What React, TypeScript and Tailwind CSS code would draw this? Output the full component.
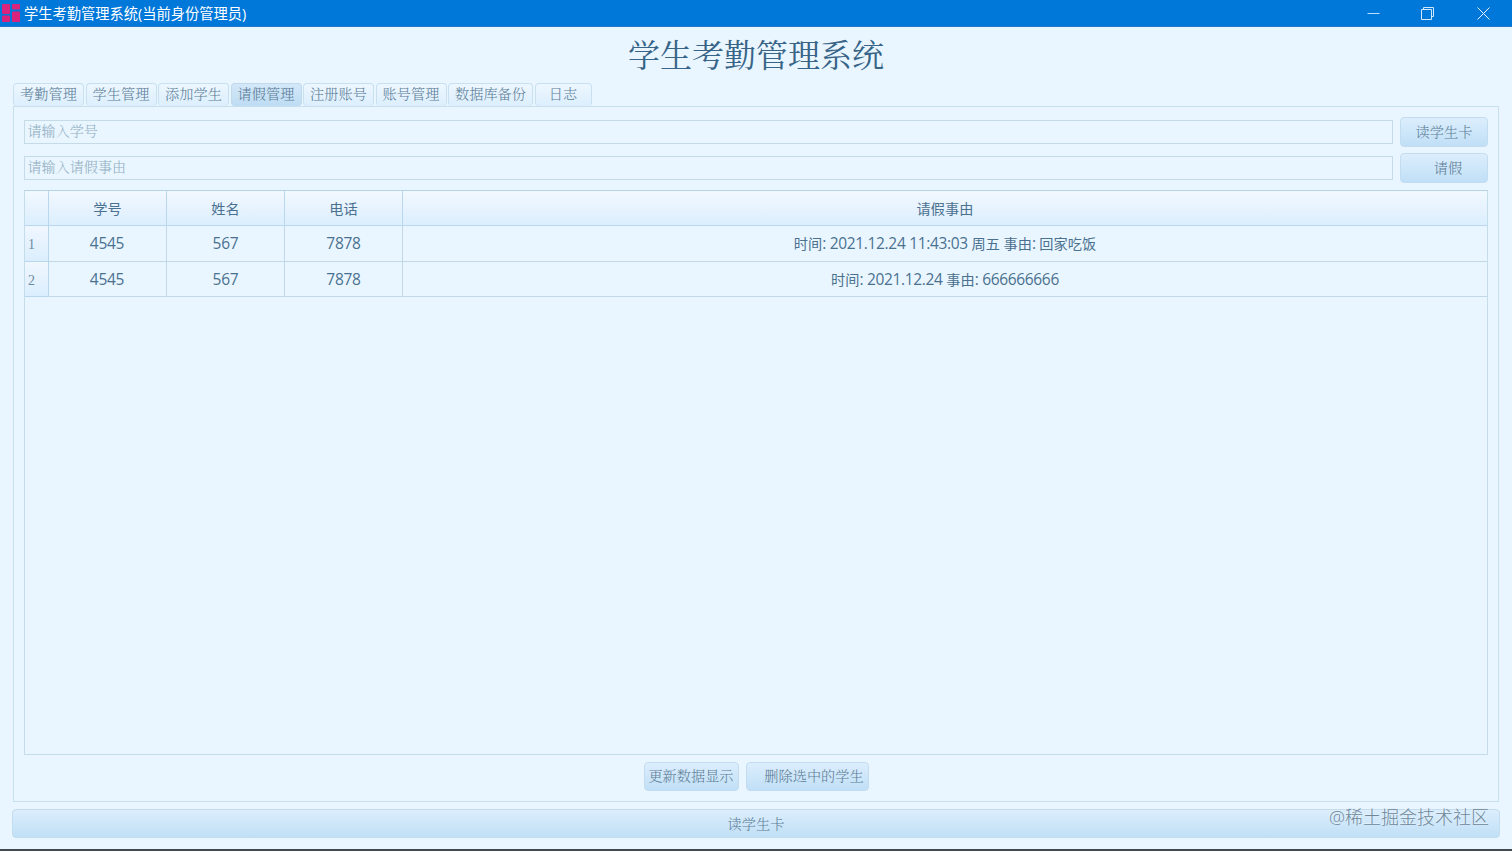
import React from 'react';
import clsx from 'clsx';

interface Tab {
  label: string;
  width: string;
}

interface LeaveRecord {
  id: string;
  name: string;
  phone: string;
  reason: string;
}

const TABS: Tab[] = [
  { label: '考勤管理', width: 'w-[71px]' },
  { label: '学生管理', width: 'w-[71px]' },
  { label: '添加学生', width: 'w-[71px]' },
  { label: '请假管理', width: 'w-[71px]' },
  { label: '注册账号', width: 'w-[71px]' },
  { label: '账号管理', width: 'w-[71px]' },
  { label: '数据库备份', width: 'w-[85px]' },
  { label: '日志', width: 'w-[57px]' },
];

const RECORDS: LeaveRecord[] = [
  { id: '4545', name: '567', phone: '7878', reason: '时间: 2021.12.24 11:43:03 周五 事由: 回家吃饭' },
  { id: '4545', name: '567', phone: '7878', reason: '时间: 2021.12.24 事由: 666666666' },
];

const COLUMNS = 'grid grid-cols-[24px_118px_118px_118px_1fr]';

function TitleBar() {
  return (
    <header className="flex h-[27px] shrink-0 items-center border-b border-[#2478c6] bg-[#0078d9] text-white">
      <svg className="ml-0.5 h-[18px] w-[18px] shrink-0" viewBox="0 0 18 18" fill="#d9237d">
        <rect x="0" y="0" width="8" height="10" rx="1" />
        <rect x="0" y="11.5" width="8" height="6.5" rx="1" />
        <rect x="10" y="0" width="8" height="5.5" rx="1" />
        <rect x="10" y="7.5" width="8" height="10.5" rx="1" />
      </svg>
      <span className="ml-1 pt-[3px] font-['Open_Sans','Noto_Sans_CJK_SC',sans-serif] text-[14.25px] leading-none font-normal">
        学生考勤管理系统(当前身份管理员)
      </span>
      <div className="ml-auto flex items-center">
        <button aria-label="最小化" className="flex w-[54px] justify-center">
          <svg width="13" height="13" viewBox="0 0 13 13" stroke="#b9dcf8" fill="none">
            <path d="M0.5 6.5h12" />
          </svg>
        </button>
        <button aria-label="还原" className="flex w-[55px] justify-center">
          <svg width="13" height="13" viewBox="0 0 13 13" stroke="#d3e9fb" fill="none">
            <path d="M0.5 2.5h10v10h-10zM2.5 2.5v-2h10v9h-2" />
          </svg>
        </button>
        <button aria-label="关闭" className="flex w-[57px] justify-center">
          <svg width="13" height="13" viewBox="0 0 13 13" stroke="#e4f2fd" fill="none">
            <path d="M0.5 0.5l12 12M12.5 0.5l-12 12" />
          </svg>
        </button>
      </div>
    </header>
  );
}

function PushButton({ className, children }: { className?: string; children: React.ReactNode }) {
  return (
    <button
      className={clsx(
        'flex items-center justify-center rounded border border-[#c3dcef] bg-linear-to-b from-[#dceefd] to-[#c0dff6] text-[14.2px] leading-none whitespace-nowrap text-[#5f7f98]',
        className,
      )}
    >
      {children}
    </button>
  );
}

// Numbers are set slightly larger than the Chinese text around them
function MixedText({ text }: { text: string }) {
  return (
    <span className="whitespace-pre">
      {text.split(/([\d.:]+)/).map((part, i) => (
        <span key={i} className={i % 2 ? 'text-[15.5px] tracking-[-0.33px]' : undefined}>
          {part}
        </span>
      ))}
    </span>
  );
}

function LeaveTable() {
  const cell = 'flex items-center justify-center border-r border-b border-[#c2d8e6] pt-px';
  const number = 'text-[15.5px] tracking-[-0.25px]';
  const head = 'flex items-center justify-center border-r border-b border-[#b9d8f0] pt-0.5';

  return (
    <div className="mt-[7px] h-[565px] border border-[#c5dce9] border-t-[#b4d3e6] font-['Open_Sans','Noto_Sans_CJK_SC',sans-serif] text-[14.2px] font-normal text-[#4b7190]">
      <div className={clsx(COLUMNS, 'h-[35px] bg-linear-to-b from-[#f2f8ff] to-[#dbeefd]')}>
        <div className={head} />
        <div className={head}>学号</div>
        <div className={head}>姓名</div>
        <div className={head}>电话</div>
        <div className={clsx(head, 'border-r-0')}>请假事由</div>
      </div>
      {RECORDS.map((record, i) => (
        <div key={i} className={clsx(COLUMNS, i === 0 ? 'h-9' : 'h-[35px]')}>
          <div className="flex items-center border-r border-b border-[#b9d7eb] bg-linear-to-b from-[#f0f7ff] to-[#dbeefd] pt-0.5 pl-[3px] font-['Liberation_Serif',serif] text-[14px] text-[#6d8ca4]">
            {i + 1}
          </div>
          <div className={clsx(cell, number, 'pr-px')}>{record.id}</div>
          <div className={clsx(cell, number)}>{record.name}</div>
          <div className={clsx(cell, number)}>{record.phone}</div>
          <div className={clsx(cell, 'border-r-0')}>
            <MixedText text={record.reason} />
          </div>
        </div>
      ))}
    </div>
  );
}

export default function App() {
  const input =
    'h-6 flex-1 border border-[#c5dce8] bg-transparent pr-[3px] pb-px pl-[2.5px] text-[14.1px] font-light text-[#426985] outline-none placeholder:text-[#91aec1]';

  return (
    <div className="flex h-[851px] w-[1512px] flex-col overflow-hidden bg-[#e9f6ff] font-['Liberation_Serif','Noto_Serif_CJK_SC','Noto_Sans_CJK_SC',serif] font-light">
      <TitleBar />
      <h1 className="flex h-14 shrink-0 items-center justify-center pt-0.5 text-[32px] leading-none font-normal text-[#376487]">
        学生考勤管理系统
      </h1>

      <nav className="flex h-[23px] shrink-0 gap-[1.5px] pl-[13px]">
        {TABS.map((tab) => (
          <button
            key={tab.label}
            className={clsx(
              'flex items-center justify-center rounded border border-b-0 pb-0.5 text-[14.2px] leading-none whitespace-nowrap text-[#5c7d97]',
              tab.width,
              tab.label === '请假管理'
                ? 'border-[#c0d9ec] bg-linear-to-b from-[#d4e8f8] to-[#bddcf3]'
                : 'border-[#c9e0f0] bg-linear-to-b from-[#edf7ff] to-[#dceefd]',
            )}
          >
            {tab.label}
          </button>
        ))}
      </nav>

      <main className="mx-[13px] flex h-[696px] shrink-0 flex-col border border-[#c8dfec] px-[10px] pt-[10px]">
        <div className="flex h-[30px] items-center gap-[7px]">
          <input className={input} placeholder="请输入学号" />
          <PushButton className="h-[30px] w-[88px]">读学生卡</PushButton>
        </div>
        <div className="mt-1.5 flex h-[30px] items-center gap-[7px]">
          <input className={input} placeholder="请输入请假事由" />
          <PushButton className="h-[30px] w-[88px] pl-2">请假</PushButton>
        </div>
        <LeaveTable />
        <div className="mt-[7px] flex justify-center gap-[7px]">
          <PushButton className="h-[29px] w-[95px]">更新数据显示</PushButton>
          <PushButton className="h-[29px] w-[123px] pl-[14px]">删除选中的学生</PushButton>
        </div>
      </main>

      <footer className="relative mx-3 mt-[7px]">
        <PushButton className="h-[29px] w-full pt-0.5">读学生卡</PushButton>
        <span className="absolute top-[-4px] right-[11px] font-['Open_Sans','Noto_Sans_CJK_SC',sans-serif] text-[18px] leading-6 text-[#6f8798] [text-shadow:-1px_-1px_0_#e3f1fc]">
          @稀土掘金技术社区
        </span>
      </footer>
      <div className="mt-auto h-0.5 shrink-0 bg-[#41484f]" />
    </div>
  );
}
